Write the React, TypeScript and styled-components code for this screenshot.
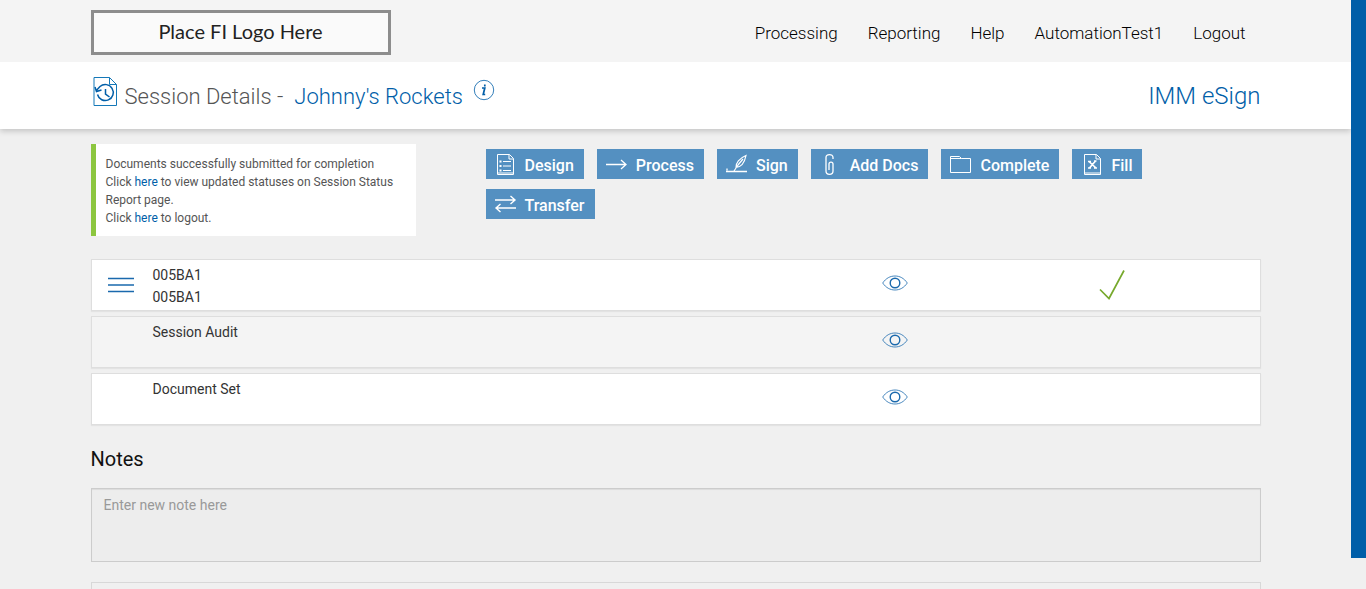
import React from "react";
import styled, { createGlobalStyle } from "styled-components";

const GlobalStyle = createGlobalStyle`
  * { box-sizing: border-box; }
  body {
    margin: 0;
    background: #f0f0f0;
    color: #333;
    font-family: Roboto, "Liberation Sans", sans-serif;
    font-size: 14px;
  }
  a { text-decoration: none; }
`;

const Shell = styled.div`
  display: flex;
  height: 100vh;
`;

const Page = styled.div`
  flex: 1;
  min-width: 0;
  overflow-y: auto;
  scrollbar-width: none;
`;

const ScrollTrack = styled.div`
  flex: none;
  width: 15px;
  padding-bottom: 31px;
`;

const ScrollThumb = styled.div`
  height: 100%;
  background: #005ea8;
`;

const Container = styled.div`
  width: 100%;
  max-width: 1170px;
  margin: 0 auto;
`;

const TopBar = styled.header`
  position: relative;
  z-index: 1;
  background: #f4f4f4;
`;

const TopBarInner = styled(Container)`
  display: flex;
  align-items: center;
  justify-content: space-between;
  height: 62px;
  padding-top: 3px;
`;

const Logo = styled.a`
  display: flex;
  align-items: center;
  justify-content: center;
  width: 300px;
  height: 45px;
  padding-bottom: 4px;
  border: 3px solid #8d8d8d;
  background: #fafafa;
  color: #222;
  font-family: Lato, "Liberation Sans", sans-serif;
  font-size: 20px;
`;

const Nav = styled.nav`
  display: flex;
  gap: 30px;
  padding: 0 15px 0 0;
`;

const NavLink = styled.a`
  color: #000;
  font-size: 17px;
  font-weight: 300;
  line-height: 20px;
`;

const TitleBar = styled.div`
  position: relative;
  background: #fff;
  box-shadow: 0 2px 6px rgba(0, 0, 0, 0.2);
`;

const TitleInner = styled(Container)`
  display: flex;
  align-items: center;
  justify-content: space-between;
  height: 67px;
  font-weight: 300;
`;

const Title = styled.h1`
  display: flex;
  align-items: center;
  margin: 0;
  color: #555;
  font-size: 22px;
  font-weight: 300;
  line-height: 28px;

  > span { padding-top: 2px; }
`;

const TitleIcon = styled.svg`
  width: 26px;
  height: 30px;
  margin: 0 6px 8px 2px;
`;

const Customer = styled.span`
  margin-left: 11px;
  color: #005ea8;
`;

const InfoButton = styled.button`
  display: flex;
  margin: 0 0 12px 10px;
  padding: 0;
  border: 0;
  background: none;
`;

const Brand = styled.div`
  color: #005ea8;
  font-size: 24px;
  line-height: 28px;
`;

const Main = styled.main`
  padding: 15px 0 20px;
`;

const Summary = styled.div`
  display: flex;
  align-items: flex-start;
  gap: 70px;
  margin-bottom: 23px;
`;

const Message = styled.div`
  flex: none;
  width: 325px;
  padding: 11px 15px 9px 10px;
  border-left: 5px solid #8cc63f;
  background: #fff;
  color: #555;
  font-size: 12px;
  line-height: 18px;

  a { color: #005ea8; }
`;

const Actions = styled.div`
  display: flex;
  flex-wrap: wrap;
  gap: 10px 13px;
  padding-top: 5px;
`;

const ActionButton = styled.button`
  display: flex;
  align-items: center;
  gap: 8px;
  height: 30px;
  padding: 0 10px 0 8px;
  border: 0;
  background: #5490c1;
  color: #fff;
  font-family: inherit;
  font-size: 16px;
  font-weight: 500;
  line-height: 20px;

  span { padding-top: 4px; }
`;

const Stroke = styled.svg`
  display: block;
  fill: none;
  stroke: currentColor;
`;

const Rows = styled.ul`
  display: grid;
  gap: 5px;
  margin: 0 0 22px;
  padding: 0;
  list-style: none;
`;

const Row = styled.li<{ $shaded?: boolean }>`
  display: grid;
  grid-template-columns: 59px 1fr 217px 217px 39px;
  min-height: 52px;
  border: 1px solid #dedede;
  background: ${(p) => (p.$shaded ? "#f4f4f4" : "#fff")};
  box-shadow: 0 1px 1px rgba(0, 0, 0, 0.05);
`;

const RowName = styled.div`
  grid-column: 2;
  padding: 4px 0 0 2px;
  line-height: 22px;
`;

const RowIcon = styled.button`
  display: flex;
  align-items: center;
  justify-content: center;
  padding: 0;
  border: 0;
  background: none;
  color: #1a69ad;
`;

const ViewButton = styled(RowIcon)`
  grid-column: 3;
  justify-self: center;
  padding-bottom: 4px;
`;

const Done = styled.div`
  display: flex;
  align-items: center;
  justify-content: center;
  color: #77a92d;
`;

const NotesLabel = styled.label`
  display: block;
  margin-bottom: 17px;
  color: #111;
  font-size: 20px;
  line-height: 24px;
`;

const NoteInput = styled.textarea`
  display: block;
  width: 100%;
  height: 74px;
  padding: 6px 12px;
  border: 1px solid #ccc;
  border-radius: 0;
  background: #ededed;
  box-shadow: inset 0 1px 1px rgba(0, 0, 0, 0.075);
  color: #333;
  font-family: inherit;
  font-size: 14px;
  line-height: 20px;
  resize: none;

  &::placeholder { color: #999; opacity: 1; }
`;

const NoteHistory = styled.section`
  min-height: 80px;
  margin-top: 20px;
  border: 1px solid #d8d8d8;
`;

const Eye = () => (
  <Stroke width="26" height="16" viewBox="0 0 26 16">
    <path d="M.7 8C4 3.2 8.200 1 13 1s9 2.200 12.300 7C22 12.800 17.800 15 13 15S4 12.800.7 8Z" strokeWidth=".8" />
    <circle cx="13" cy="8" r="4.800" strokeWidth="1.400" />
  </Stroke>
);

const icons: Record<string, React.ReactNode> = {
  Design: (
    <>
      <path d="M3.500 1.500h12l4 4v16h-16zM15 1.500V6h4.500" strokeWidth="1" />
      <path d="M9 8.500h8M9 13h8M9 17.500h8M3.500 20h16" strokeWidth="1" />
      <path d="M5.500 8.500h2M5.500 13h2M5.500 17.500h2" strokeWidth="2" />
    </>
  ),
  Process: <path d="M1 11.500h20M16 7l5 4.500-5 4.500" strokeWidth="1.300" />,
  Sign: (
    <>
      <path d="M1 18.500h21M2 15.500v2" strokeWidth="1.300" />
      <path d="M9 18l4-6M11 14.500c-.5-4 3.500-9.500 10-12-1.200 6-4 11.500-10 12ZM13 12l5-6" strokeWidth="1.200" />
    </>
  ),
  "Add Docs": (
    <path
      d="M14 6V4.500C14 .6 7 .6 7 4.500V18c0 4.600 7 4.600 7 0v-7c0-2.600-4-2.600-4 0v6"
      strokeWidth="1.300"
    />
  ),
  Complete: <path d="M1.500 19.500v-16h9l2 2h9v14zM1.500 5.500h11" strokeWidth="1" />,
  Fill: (
    <>
      <path d="M4.500 1.500h12l4 4v16h-16zM16 1.500V6h4.500M4.500 20h16" strokeWidth="1" />
      <path d="M9 8.500l7 6.500M9 15.500 15.500 8M8 8.500h3M14 8h2.500M8 15h3M14 15h3" strokeWidth="1.700" />
    </>
  ),
  Transfer: <path d="M1 7h20M16.500 3l4.500 4-4.500 4M22 15H2M6.500 11 2 15l4.500 4" strokeWidth="1.400" />,
};

const navItems = ["Processing", "Reporting", "Help", "AutomationTest1", "Logout"];

export default function App() {
  return (
    <Shell>
      <GlobalStyle />
      <Page>
        <TopBar>
          <TopBarInner>
            <Logo href="#">Place FI Logo Here</Logo>
            <Nav>
              {navItems.map((item) => (
                <NavLink key={item} href="#">{item}</NavLink>
              ))}
            </Nav>
          </TopBarInner>
        </TopBar>
        <TitleBar>
          <TitleInner>
            <Title>
              <TitleIcon viewBox="0 0 26 30" fill="none" stroke="#1578b8">
                <path d="M1 .5h15.500l7 7v21H1zM16.500.5v7h7" />
                <path d="M4.500 17.500a8 8 0 1 0 2.500-8L3.800 13M2 10l1.500 4.500 5-1.500M12.500 12v5l4 3" strokeWidth="1.500" stroke="#005ea8" />
              </TitleIcon>
              <span>Session Details -</span>
              <Customer>Johnny's Rockets</Customer>
              <InfoButton aria-label="Session information">
                <svg width="22" height="22" viewBox="0 0 22 22" fill="none" stroke="#005ea8">
                  <circle cx="11" cy="11" r="9.700" strokeWidth=".8" />
                  <path d="M9 9h2.800l-1.600 6.500h2M11.800 5.500v2" strokeWidth="1.700" />
                </svg>
              </InfoButton>
            </Title>
            <Brand>IMM eSign</Brand>
          </TitleInner>
        </TitleBar>
        <Main>
          <Container>
            <Summary>
              <Message>
                Documents successfully submitted for completion<br />
                Click <a href="#">here</a> to view updated statuses on Session Status Report page.<br />
                Click <a href="#">here</a> to logout.
              </Message>
              <Actions>
                {Object.entries(icons).map(([name, drawing]) => (
                  <ActionButton key={name}>
                    <Stroke width="23" height="23" viewBox="0 0 23 23">{drawing}</Stroke>
                    <span>{name}</span>
                  </ActionButton>
                ))}
              </Actions>
            </Summary>
            <Rows>
              <Row>
                <RowIcon aria-label="Document menu">
                  <Stroke width="26" height="16" viewBox="0 0 26 16">
                    <path d="M0 1.500h26M0 8h26M0 14.500h26" strokeWidth="1.500" />
                  </Stroke>
                </RowIcon>
                <RowName>005BA1<br />005BA1</RowName>
                <ViewButton aria-label="View 005BA1"><Eye /></ViewButton>
                <Done>
                  <Stroke width="26" height="32" viewBox="0 0 26 32">
                    <path d="M1 20.500l9 9L25 1.500" strokeWidth="1.700" />
                  </Stroke>
                </Done>
              </Row>
              <Row $shaded>
                <RowName>Session Audit</RowName>
                <ViewButton aria-label="View session audit"><Eye /></ViewButton>
              </Row>
              <Row>
                <RowName>Document Set</RowName>
                <ViewButton aria-label="View document set"><Eye /></ViewButton>
              </Row>
            </Rows>
            <NotesLabel htmlFor="note">Notes</NotesLabel>
            <NoteInput id="note" placeholder="Enter new note here" />
            <NoteHistory />
          </Container>
        </Main>
      </Page>
      <ScrollTrack>
        <ScrollThumb />
      </ScrollTrack>
    </Shell>
  );
}
